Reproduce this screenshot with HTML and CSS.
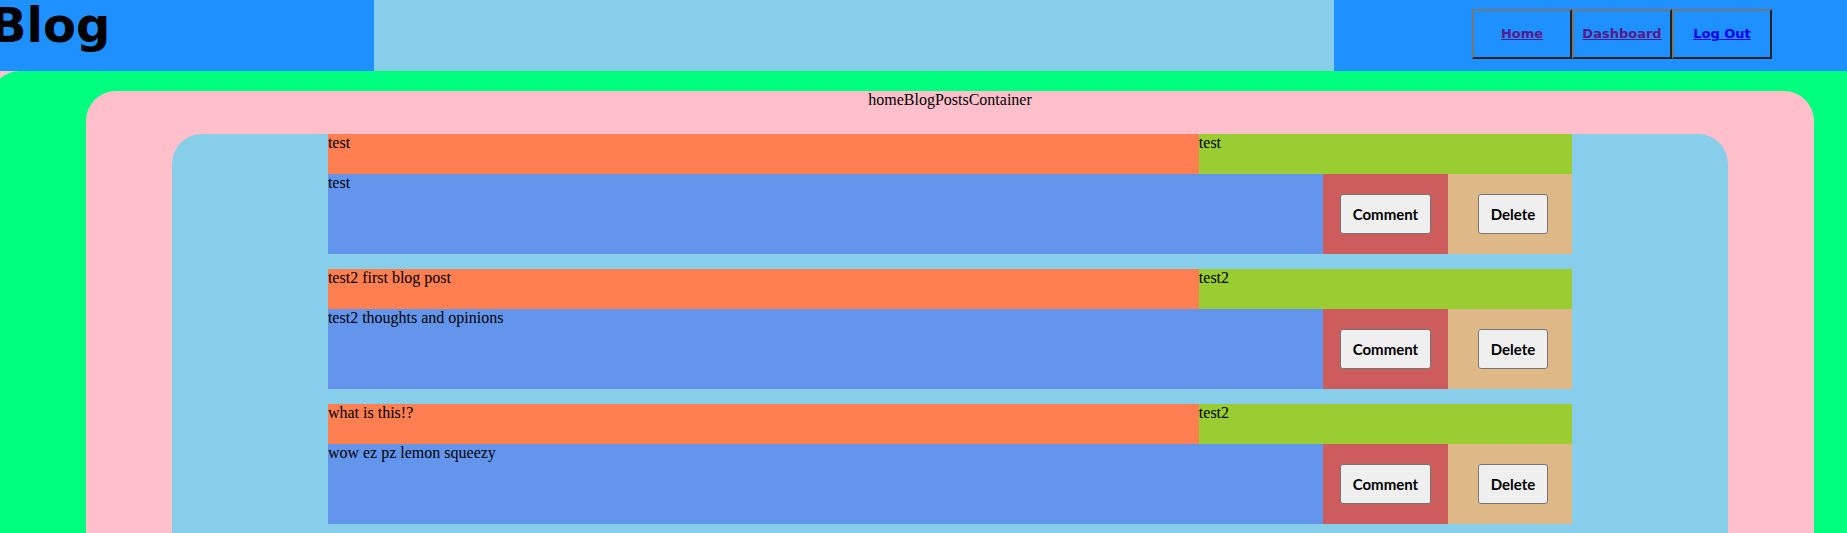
FILE: index.html
```html
<!DOCTYPE html>
<html lang="en">
<head>
<meta charset="utf-8">
<title>Blog</title>
<link rel="stylesheet" href="styles.css">
</head>
<body>
<div class="page">
  <header class="header">
    <div class="brand"><h1 class="logo">Blog</h1></div>
    <nav class="nav">
      <a class="nav-link visited" href="#home">Home</a>
      <a class="nav-link visited" href="#dashboard">Dashboard</a>
      <a class="nav-link" href="#logout">Log Out</a>
    </nav>
  </header>
  <main class="main">
    <section class="posts-container">
      <p class="label">homeBlogPostsContainer</p>
      <div class="posts">
        <article class="post">
          <div class="post-top">
            <div class="title">test</div>
            <div class="author">test</div>
          </div>
          <div class="post-bottom">
            <div class="content">test</div>
            <div class="comment-cell"><button class="btn" type="button">Comment</button></div>
            <div class="delete-cell"><button class="btn" type="button">Delete</button></div>
          </div>
        </article>
        <article class="post">
          <div class="post-top">
            <div class="title">test2 first blog post</div>
            <div class="author">test2</div>
          </div>
          <div class="post-bottom">
            <div class="content">test2 thoughts and opinions</div>
            <div class="comment-cell"><button class="btn" type="button">Comment</button></div>
            <div class="delete-cell"><button class="btn" type="button">Delete</button></div>
          </div>
        </article>
        <article class="post">
          <div class="post-top">
            <div class="title">what is this!?</div>
            <div class="author">test2</div>
          </div>
          <div class="post-bottom">
            <div class="content">wow ez pz lemon squeezy</div>
            <div class="comment-cell"><button class="btn" type="button">Comment</button></div>
            <div class="delete-cell"><button class="btn" type="button">Delete</button></div>
          </div>
        </article>
      </div>
    </section>
  </main>
</div>
</body>
</html>
```
FILE: styles.css
```css
* {
  box-sizing: border-box;
}

body {
  margin: 0;
  min-height: 100vh;
  overflow: hidden;
  display: flex;
  flex-direction: column;
  background: pink;
  font: 16px/18px "Liberation Serif", "Times New Roman", serif;
  color: black;
}

/* The page bleeds past both window edges. */
.page {
  flex: 1;
  display: flex;
  flex-direction: column;
  margin: 0 -63px 0 -10px;
}

.header {
  display: grid;
  grid-template-columns: 20% 30%;
  justify-content: space-between;
  min-height: 71px;
  background: skyblue;
}

.brand {
  background: dodgerblue;
}

.logo {
  margin: 0;
  font: bold 48px/50px "DejaVu Sans", sans-serif;
}

.nav {
  display: flex;
  justify-content: center;
  align-items: center;
  background: dodgerblue;
}

.nav-link {
  width: 100px;
  height: 50px;
  margin-bottom: 3px;
  border: 2px solid;
  border-color: #767676 #212121 #212121 #767676;
  color: #0000ee;
  font: bold 13px/46px "DejaVu Sans", sans-serif;
  text-align: center;
}

.visited {
  color: #551a8b;
}

.main {
  flex: 1;
  display: flex;
  flex-direction: column;
  padding: 20px 5% 0;
  border-radius: 30px 30px 0 0;
  background: springgreen;
}

.posts-container {
  flex: 1;
  display: flex;
  flex-direction: column;
  padding: 0 5%;
  border-radius: 30px 30px 0 0;
  background: pink;
}

.label {
  margin: 0 0 25px;
  text-align: center;
}

.posts {
  flex: 1;
  display: flex;
  flex-direction: column;
  gap: 15px;
  padding: 0 10% 9px;
  border-radius: 30px 30px 0 0;
  background: skyblue;
}

.post-top {
  display: grid;
  grid-template-columns: 70% 30%;
  min-height: 40px;
}

.title {
  background: coral;
}

.author {
  background: yellowgreen;
}

.post-bottom {
  display: grid;
  grid-template-columns: 80% 10% 10%;
  min-height: 80px;
}

.content {
  background: cornflowerblue;
}

.comment-cell,
.delete-cell {
  display: flex;
  align-items: center;
}

.comment-cell {
  justify-content: center;
  background: indianred;
}

.delete-cell {
  padding-left: 30px;
  background: burlywood;
}

.btn {
  height: 40px;
  padding: 0 12px;
  border: 1px solid #767676;
  border-radius: 3px;
  background: #efefef;
  color: black;
  font: bold 15px/20px Lato, sans-serif;
}
```
